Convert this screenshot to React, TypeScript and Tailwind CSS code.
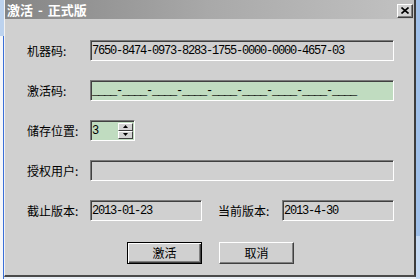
import React from 'react';

const cjk = "font-['Noto_Sans_CJK_SC','Noto_Sans',sans-serif]";
const mono = "font-['Liberation_Mono',monospace] text-[12px] tracking-[-1.2px]";

const sunken =
  'border border-t-[#7a7a7a] border-l-[#7a7a7a] border-b-white border-r-white shadow-[inset_1px_1px_0_#404040] h-[21px] flex items-center pl-[1px] overflow-hidden';

const Field: React.FC<{ label: string; children?: React.ReactNode; green?: boolean }> = ({ label, children, green }) => (
  <div className="flex items-center h-[21px]">
    <div className={`${cjk} w-[63px] text-[12px] text-black leading-none`}>{label}</div>
    <div className={`${sunken} w-[304px] ${green ? 'bg-[#c0dcc0]' : 'bg-[#d0d0d0]'}`}>{children}</div>
  </div>
);

const mask = '____-____-____-____-____-____-____-____-____';

const App: React.FC = () => {
  return (
    <div className="w-[420px] h-[279px] flex bg-[#e9eef5] overflow-hidden">
      {/* things behind the dialog */}
      <div className="w-[4px] h-full flex flex-col">
        <div className="h-[36px] bg-[#bcd2ee]"></div>
        <div className="flex-1 bg-[#f4f6fa] border-r border-[#3a6fd8]"></div>
      </div>

      <div className="w-[412px] h-[277px] flex flex-col bg-[#d0d0d0] border-l border-l-[#f2f2f2] border-r-2 border-r-[#3c3c3c] border-b-2 border-b-[#4a4a4a]">
        {/* title bar */}
        <div className="h-[19px] flex items-center justify-between pl-[2px] pr-[1px] bg-gradient-to-r from-[#858585] via-[#a9a9a9] to-[#c2c2c2]">
          <span className={`${cjk} flex items-center text-[13px] font-bold text-white leading-none`}>
            <span>激活</span>
            <span className="mx-[5px]">-</span>
            <span>正式版</span>
          </span>
          <button className="w-[16px] h-[14px] mt-[2px] flex items-center justify-center bg-[#d4d4d4] border border-t-white border-l-white border-b-[#404040] border-r-[#404040] shadow-[inset_-1px_-1px_0_#808080]">
            <svg width="8" height="7" viewBox="0 0 8 7">
              <path d="M0.5 0.5 L7.5 6.5 M7.5 0.5 L0.5 6.5" stroke="#000" strokeWidth="1.6" />
            </svg>
          </button>
        </div>

        {/* body */}
        <div className="flex-1 flex flex-col pl-[22px] pt-[21px] gap-[19px]">
          <Field label="机器码:">
            <span className={`${mono} text-black`}>7650-8474-0973-8283-1755-0000-0000-4657-03</span>
          </Field>
          <Field label="激活码:" green>
            <span className={`${mono} text-black`}>{mask}</span>
          </Field>
          <div className="flex items-center h-[21px]">
            <div className={`${cjk} w-[63px] text-[12px] text-black leading-none`}>储存位置:</div>
            <div className={`${sunken} w-[45px] bg-[#c0dcc0] justify-between pr-[1px]`}>
              <span className={`${mono} text-black`}>3</span>
              <div className="flex flex-col w-[15px]">
                <div className="h-[8px] flex items-center justify-center bg-[#d4d4d4] border border-t-white border-l-white border-b-[#404040] border-r-[#404040]">
                  <svg width="5" height="3" viewBox="0 0 5 3"><path d="M2.5 0 L5 3 L0 3 Z" fill="#000" /></svg>
                </div>
                <div className="h-[8px] flex items-center justify-center bg-[#d4d4d4] border border-t-white border-l-white border-b-[#404040] border-r-[#404040]">
                  <svg width="5" height="3" viewBox="0 0 5 3"><path d="M0 0 L5 0 L2.5 3 Z" fill="#000" /></svg>
                </div>
              </div>
            </div>
          </div>
          <Field label="授权用户:" />
          <div className="flex items-center h-[21px]">
            <div className={`${cjk} w-[63px] text-[12px] text-black leading-none`}>截止版本:</div>
            <div className={`${sunken} w-[112px] bg-[#d0d0d0]`}>
              <span className={`${mono} text-black`}>2013-01-23</span>
            </div>
            <div className={`${cjk} ml-[16px] w-[64px] text-[12px] text-black leading-none`}>当前版本:</div>
            <div className={`${sunken} w-[112px] bg-[#d0d0d0]`}>
              <span className={`${mono} text-black`}>2013-4-30</span>
            </div>
          </div>

          {/* buttons */}
          <div className="flex gap-[17px] pl-[100px] mt-[2px]">
            <button className={`${cjk} w-[75px] h-[22px] text-[12px] text-black bg-[#d0d0d0] border border-black shadow-[inset_1px_1px_0_#fff,inset_-1px_-1px_0_#404040,inset_-2px_-2px_0_#808080]`}>
              激活
            </button>
            <button className={`${cjk} w-[75px] h-[22px] text-[12px] text-black bg-[#d0d0d0] border border-t-white border-l-white border-b-[#404040] border-r-[#404040] shadow-[inset_-1px_-1px_0_#808080]`}>
              取消
            </button>
          </div>
        </div>
      </div>

      <div className="w-[4px] h-full flex flex-col">
        <div className="h-[236px] bg-[#9fc0ea]"></div>
        <div className="flex-1 bg-[#c6dbf5]"></div>
      </div>
    </div>
  );
};

export default App;
